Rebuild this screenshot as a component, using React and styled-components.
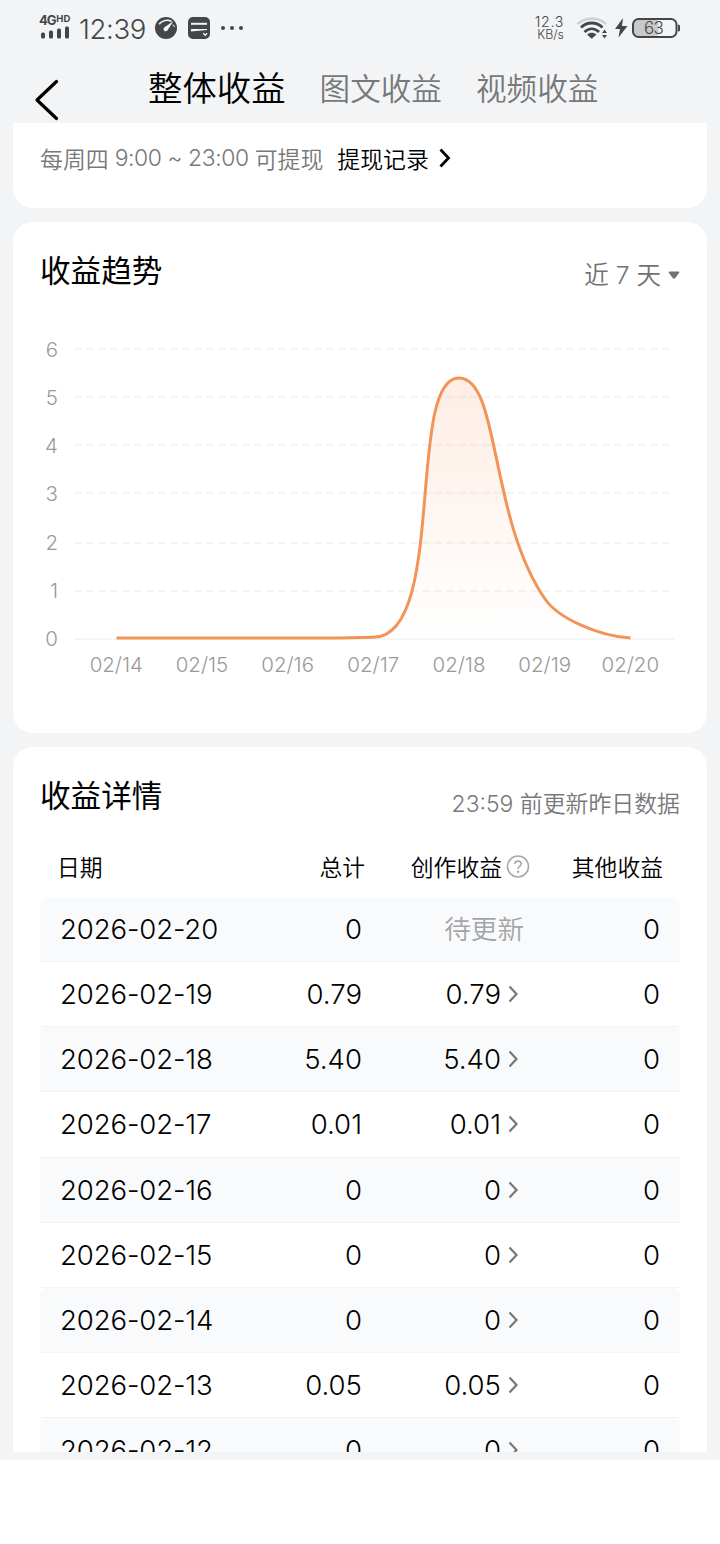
import React from "react";
import styled, { createGlobalStyle } from "styled-components";

const Global = createGlobalStyle`
  * { box-sizing: border-box; }
  html, body { margin: 0; padding: 0; background: #fff; }
  body {
    font-family: Inter, "Noto Sans CJK SC", sans-serif;
    font-weight: 300;
    color: #000;
  }
`;

const Screen = styled.div`
  width: 720px;
  height: 1460px;
  background: #f3f4f6;
  display: flex;
  flex-direction: column;
  overflow: hidden;
`;

const StatusBar = styled.div`
  height: 56px;
  flex: none;
  display: flex;
  justify-content: space-between;
  align-items: center;
  padding: 0 39px 0 39px;
  color: #454648;
`;

const StatusGroup = styled.div`
  display: flex;
  align-items: center;
`;

const Network = styled.div`
  width: 32px;
  height: 28px;
  display: flex;
  flex-direction: column;
`;

const NetworkLabel = styled.div`
  display: flex;
  align-items: flex-start;
  height: 12px;
  font: 700 13px/12px Inter, sans-serif;
  letter-spacing: -1.1px;
  white-space: nowrap;
  sup { font-size: 9.5px; line-height: 9px; letter-spacing: 0; margin-left: 1px; }
`;

const Clock = styled.div`
  margin: 2px 0 0 8px;
  width: 75px;
  font-size: 27.6px;
  line-height: 32px;
  letter-spacing: -0.4px;
  font-weight: 350;
  white-space: nowrap;
`;

const StatusIcon = styled.svg`
  display: block;
  flex: none;
  margin-left: ${(p) => p.$gap || 0}px;
`;

const Speed = styled.div`
  width: 38px;
  text-align: right;
  font-size: 14.2px;
  line-height: 14px;
  letter-spacing: 0.7px;
  font-weight: 350;
  white-space: nowrap;
  div:last-child { font-size: 12.4px; line-height: 12px; letter-spacing: 0; }
`;

const NavBar = styled.header`
  height: 67px;
  flex: none;
  display: flex;
  align-items: flex-start;
  padding-left: 33px;
`;

const BackButton = styled.button`
  border: 0;
  padding: 0;
  background: none;
  margin-top: 22px;
  width: 28px;
  height: 44px;
`;

const Tabs = styled.nav`
  display: flex;
  margin: 11px 0 0 87px;
  gap: 34px;
`;

const Tab = styled.div`
  font-size: ${(p) => (p.$active ? 34.4 : 30.6)}px;
  line-height: 42px;
  height: 42px;
  padding-top: 1px;
  color: ${(p) => (p.$active ? "#000" : "#77787a")};
  font-weight: 350;
  white-space: nowrap;
`;

const Content = styled.main`
  flex: none;
  height: 1329px;
  overflow: hidden;
  display: flex;
  flex-direction: column;
  gap: 14px;
  padding: 0 13px;
`;

const Card = styled.section`
  flex: none;
  background: #fff;
  height: ${(p) => p.$height}px;
  border-radius: ${(p) => (p.$cut ? "0 0 20px 20px" : "20px")};
  padding: 0 27px;
`;

const WithdrawLine = styled.div`
  display: flex;
  align-items: center;
  height: 70px;
  font-size: 22.9px;
  font-weight: 350;
  color: #77787a;
  white-space: pre;
`;

const Hours = styled.span`
  letter-spacing: -0.42px;
  font-weight: 300;
`;

const WithdrawLink = styled.span`
  display: flex;
  align-items: center;
  gap: 10px;
  margin-left: 14px;
  color: #000;
`;

const CardHead = styled.div`
  display: flex;
  justify-content: space-between;
  align-items: flex-start;
  padding-top: 28px;
  height: ${(p) => p.$height}px;
`;

const CardTitle = styled.h2`
  margin: 0;
  font-size: 30.6px;
  line-height: 42px;
  font-weight: 400;
`;

const RangePicker = styled.div`
  display: flex;
  align-items: center;
  gap: 7px;
  margin-top: 6px;
  font-size: 24.6px;
  line-height: 38px;
  font-weight: 350;
  color: #707173;
`;

const UpdateNote = styled.div`
  margin-top: 10px;
  font-size: 22.9px;
  line-height: 38px;
  font-weight: 350;
  color: #77787a;
  white-space: nowrap;
`;

const Chart = styled.svg`
  display: block;
  text { font-size: 20.5px; font-weight: 300; fill: #999; }
`;

const Table = styled.div`
  width: 640px;
`;

const Line = styled.div`
  display: grid;
  align-items: center;
  white-space: nowrap;
`;

const HeadLine = styled(Line)`
  grid-template-columns: 150px 158px 165px 133px;
  height: 60px;
  padding: 0 0 2px 17px;
  font-size: 22.8px;
  font-weight: 350;
`;

const BodyLine = styled(Line)`
  grid-template-columns: 170px 132px 159px 139px;
  height: 65.14px;
  padding-left: 20px;
  border-radius: 6px 6px 0 0;
  border-bottom: 1px solid #f3f4f6;
  background: ${(p) => (p.$striped ? "#f9fafc" : "#fff")};
  font-size: 27.6px;
`;

const Cell = styled.div`
  display: flex;
  align-items: center;
  justify-content: flex-end;
  gap: ${(p) => p.$gap || 0}px;
`;

const DateCell = styled.div`
  letter-spacing: -0.15px;
`;

const Pending = styled.span`
  color: #a4a5a7;
  font-size: 26.6px;
  font-weight: 350;
  line-height: 36px;
  margin-right: -3px;
`;

const rows = [
  ["2026-02-20", "0", null],
  ["2026-02-19", "0.79", "0.79"],
  ["2026-02-18", "5.40", "5.40"],
  ["2026-02-17", "0.01", "0.01"],
  ["2026-02-16", "0", "0"],
  ["2026-02-15", "0", "0"],
  ["2026-02-14", "0", "0"],
  ["2026-02-13", "0.05", "0.05"],
  ["2026-02-12", "0", "0"],
];

const gridLines = [[6, 349], [5, 397], [4, 445], [3, 493], [2, 543], [1, 591]];
const days = ["02/14", "02/15", "02/16", "02/17", "02/18", "02/19", "02/20"];
const curve =
  "M116.5 638H330C345 638 360 637.7 373.5 637.3C447 637.3 406 378 459 378C500 378 489 518 545 599C558 618 598 636 630.5 638";

function Gauge() {
  return (
    <StatusIcon width="24" height="24" viewBox="0 0 24 24">
      <circle cx="12" cy="12" r="11" fill="#454648" />
      <path d="M5 8.2C8 4.2 14 3.400 17.500 5.500" fill="none" stroke="#f3f4f6" strokeWidth="1.5" />
      <path d="M19.300 5.300L13.700 14.1A2.2 2.2 0 1 1 10.5 11.300Z" fill="#f3f4f6" />
      <path d="M19 8.5L20.5 11" stroke="#f3f4f6" strokeWidth="1" />
    </StatusIcon>
  );
}

function CardIcon() {
  return (
    <StatusIcon $gap={9} width="24" height="24" viewBox="0 0 24 24">
      <rect x="1" y="1" width="22" height="22" rx="5" fill="#454648" />
      <path d="M4 7.8H20" stroke="#f3f4f6" strokeWidth="2" />
      <path d="M4 12.900H20V14L4 15.600Z" fill="#f3f4f6" />
      <path d="M16.3 17.2L18.2 19.2L20.1 17.2" fill="none" stroke="#f3f4f6" strokeWidth="1.4" />
    </StatusIcon>
  );
}

function Wifi() {
  return (
    <StatusIcon $gap={12} width="32" height="24" viewBox="0 0 32 24" fill="none" stroke="#454648">
      <path d="M1.500 8.200C9 1 23 1 30 8.200" stroke="#cfd0d2" strokeWidth="2.6" />
      <path d="M5 11.500C11 5.500 20.500 5.500 26.500 11.500" strokeWidth="2.800" />
      <path d="M8.500 16C13 11.700 18.500 11.700 23 16" strokeWidth="2.800" />
      <path d="M11 18.500C14 16 17.500 16 20.500 18.500L15.700 22.800Z" fill="#454648" stroke="none" />
      <path d="M26 17L28.500 13.500L31 17ZM26 19L28.500 22.500L31 19Z" fill="#454648" stroke="none" />
    </StatusIcon>
  );
}

function Battery() {
  return (
    <StatusIcon $gap={3} width="50" height="22" viewBox="0 0 50 22">
      <rect x="2.500" y="2.500" width="25" height="17" rx="4" fill="#c8c9cb" />
      <rect x="2" y="2" width="43.500" height="18" rx="5.500" fill="none" stroke="#454648" strokeWidth="2" />
      <path d="M47 7.500Q49 7.500 49 9V13Q49 14.500 47 14.500Z" fill="#454648" />
      <text x="22.500" y="17" textAnchor="middle" fontSize="17" letterSpacing="-0.700" fontWeight="350" fill="#454648">63</text>
    </StatusIcon>
  );
}

function TrendChart() {
  return (
    <Chart width="640" height="370" viewBox="40 320 640 370">
      <defs>
        <linearGradient id="area" x1="0" y1="378" x2="0" y2="638" gradientUnits="userSpaceOnUse">
          <stop offset="0" stopColor="#f58f55" stopOpacity="0.16" />
          <stop offset="1" stopColor="#f58f55" stopOpacity="0" />
        </linearGradient>
      </defs>
      {gridLines.map(([n, y]) => (
        <g key={n}>
          <text x="58" y={y + (n < 3 ? 7 : 8)} textAnchor="end">{n}</text>
          <path d={`M74 ${y}H670`} stroke="#f5f5f5" strokeWidth="2" strokeDasharray="8 4" />
        </g>
      ))}
      <text x="58" y="646" textAnchor="end">0</text>
      <path d="M74 639H674" stroke="#f5f5f5" strokeWidth="2" />
      <path d={`${curve}Z`} fill="url(#area)" />
      <path d={curve} fill="none" stroke="#f29358" strokeWidth="3" />
      {days.map((d, i) => (
        <text key={d} x={116.3 + i * 85.67} y="672" textAnchor="middle">{d}</text>
      ))}
    </Chart>
  );
}

export default function App() {
  return (
    <>
      <Global />
      <Screen>
        <StatusBar>
          <StatusGroup>
            <Network>
              <NetworkLabel>4G<sup>HD</sup></NetworkLabel>
              <svg width="32" height="14" viewBox="0 0 32 14" fill="#454648">
                <rect x="2" y="6.500" width="4" height="6" rx="1.500" />
                <rect x="10" y="4.500" width="4" height="8" rx="1.500" />
                <rect x="18" y="2.500" width="4" height="10" rx="1.500" />
                <rect x="26" y="0.500" width="4" height="12" rx="1.500" />
              </svg>
            </Network>
            <Clock>12:39</Clock>
            <Gauge />
            <CardIcon />
            <StatusIcon $gap={9} width="24" height="6" viewBox="0 0 24 6" fill="#454648">
              <circle cx="3" cy="3" r="2" />
              <circle cx="12" cy="3" r="2" />
              <circle cx="21" cy="3" r="2" />
            </StatusIcon>
          </StatusGroup>
          <StatusGroup>
            <Speed>
              <div>12.3</div>
              <div>KB/s</div>
            </Speed>
            <Wifi />
            <StatusIcon $gap={6} width="14" height="20" viewBox="0 0 14 20">
              <path d="M9 0L1 11H6L4.500 19.500L13.500 8H8Z" fill="#454648" />
            </StatusIcon>
            <Battery />
          </StatusGroup>
        </StatusBar>
        <NavBar>
          <BackButton aria-label="返回">
            <svg width="28" height="44" viewBox="0 0 28 44" fill="none" stroke="#000" strokeWidth="3.200" strokeLinecap="round" strokeLinejoin="round">
              <path d="M23.500 3.500L4 22L23.500 40.500" />
            </svg>
          </BackButton>
          <Tabs>
            <Tab $active>整体收益</Tab>
            <Tab>图文收益</Tab>
            <Tab>视频收益</Tab>
          </Tabs>
        </NavBar>
        <Content>
          <Card $cut $height={85}>
            <WithdrawLine>
              每周四<Hours> 9:00 ~ 23:00 </Hours>可提现
              <WithdrawLink>
                提现记录
                <svg width="13" height="20" viewBox="0 0 13 20" fill="none" stroke="#000" strokeWidth="2.800">
                  <path d="M1.500 1.500L9.500 10L1.500 18.500" />
                </svg>
              </WithdrawLink>
            </WithdrawLine>
          </Card>
          <Card $height={511}>
            <CardHead $height={98}>
              <CardTitle>收益趋势</CardTitle>
              <RangePicker>
                近 7 天
                <svg width="12" height="9" viewBox="0 0 12 9">
                  <path d="M1.500 0.500H10.500Q12 0.500 11 2L7.300 7Q6 8.500 4.700 7L1 2Q0 0.500 1.500 0.500Z" fill="#707173" />
                </svg>
              </RangePicker>
            </CardHead>
            <TrendChart />
          </Card>
          <Card $height={800}>
            <CardHead $height={90}>
              <CardTitle>收益详情</CardTitle>
              <UpdateNote>23:59 前更新昨日数据</UpdateNote>
            </CardHead>
            <Table>
              <HeadLine>
                <div>日期</div>
                <Cell>总计</Cell>
                <Cell $gap={4}>
                  创作收益
                  <svg width="24" height="24" viewBox="0 0 24 24" fill="none" stroke="#aaa" strokeWidth="1.600">
                    <circle cx="12" cy="12.500" r="10.500" />
                    <path d="M8.800 10C8.800 6 15.300 6.200 15.300 9.800C15.300 12.200 12 12 12 15" strokeWidth="1.700" />
                    <circle cx="12" cy="17.800" r="1.200" fill="#aaa" stroke="none" />
                  </svg>
                </Cell>
                <Cell>其他收益</Cell>
              </HeadLine>
              {rows.map(([date, total, creation], i) => (
                <BodyLine key={date} $striped={i % 2 === 0}>
                  <DateCell>{date}</DateCell>
                  <Cell>{total}</Cell>
                  <Cell $gap={7}>
                    {creation === null ? (
                      <Pending>待更新</Pending>
                    ) : (
                      <>
                        {creation}
                        <svg width="13" height="18" viewBox="0 0 13 18" fill="none" stroke="#777" strokeWidth="2.200">
                          <path d="M1.500 1.500L8.500 9L1.500 16.500" />
                        </svg>
                      </>
                    )}
                  </Cell>
                  <Cell>0</Cell>
                </BodyLine>
              ))}
            </Table>
          </Card>
        </Content>
      </Screen>
    </>
  );
}
